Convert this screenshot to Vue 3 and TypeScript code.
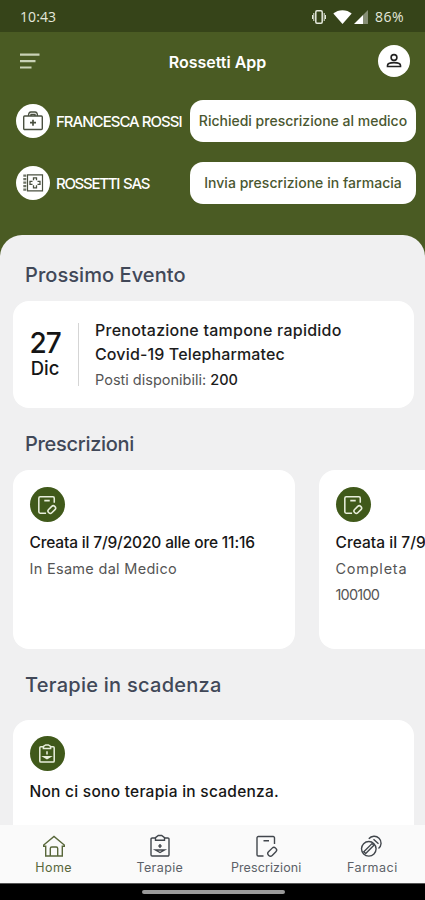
<script setup lang="ts">
interface Contact {
  name: string
  icon: 'bag' | 'safe'
  action: string
  cls: string
}
interface Prescription {
  title: string
  status: string
  code?: string
}
interface Tab {
  label: string
  icon: 'home' | 'clipboard' | 'note' | 'pills'
}

const contacts: Contact[] = [
  { name: 'FRANCESCA ROSSI', icon: 'bag', action: 'Richiedi prescrizione al medico', cls: 'doctor' },
  { name: 'ROSSETTI SAS', icon: 'safe', action: 'Invia prescrizione in farmacia', cls: 'pharmacy' },
]
const prescriptions: Prescription[] = [
  { title: 'Creata il 7/9/2020 alle ore 11:16', status: 'In Esame dal Medico' },
  { title: 'Creata il 7/9', status: 'Completa', code: '100100' },
]
const tabs: Tab[] = [
  { label: 'Home', icon: 'home' },
  { label: 'Terapie', icon: 'clipboard' },
  { label: 'Prescrizioni', icon: 'note' },
  { label: 'Farmaci', icon: 'pills' },
]
</script>

<template>
  <div class="phone">
    <div class="status">
      <span class="clock">10:43</span>
      <div class="indicators">
        <svg class="vibrate" width="14" height="16" viewBox="0 0 14 16" fill="none" stroke="currentColor">
          <rect x="3.8" y="1.8" width="6.4" height="12.4" rx="1.2" stroke-width="1.5" />
          <path d="M1.8 4v8M.5 6v4M12.2 4v8M13.5 6v4" />
        </svg>
        <svg class="wifi" width="19" height="14" viewBox="0 0 19 14">
          <path d="M.3 3.600C5.300-.9 13.700-.9 18.700 3.600L9.500 14Z" fill="currentColor" />
        </svg>
        <svg class="signal" width="14" height="14" viewBox="0 0 14 14" fill="currentColor">
          <path d="M0 14 9 5v9Z" />
          <path d="M9 5 14 0v14H9Z" opacity=".4" />
        </svg>
        <span class="battery">86%</span>
      </div>
    </div>

    <header class="header">
      <div class="appbar">
        <svg class="menu" width="20" height="18" viewBox="0 0 20 18" fill="none" stroke="currentColor" stroke-width="2.2">
          <path d="M0 1.700h19.500M0 8.200h15.500M0 14.500h11.500" />
        </svg>
        <h1>Rossetti App</h1>
        <div class="avatar">
          <svg width="16" height="16" viewBox="0 0 16 16" fill="none" stroke="currentColor" stroke-width="1.6">
            <circle cx="8" cy="4.500" r="2.900" />
            <path d="M1.500 13.500v-1C1.500 10.400 4 9.600 8 9.600s6.500.8 6.500 2.900v1Z" />
          </svg>
        </div>
      </div>
      <div v-for="c in contacts" :key="c.name" class="contact" :class="c.cls">
        <div class="badge">
          <svg v-if="c.icon === 'bag'" width="22" height="22" viewBox="0 0 22 22" fill="none" stroke="currentColor" stroke-width="1.400">
            <rect x="1.700" y="6" width="18.600" height="13.500" rx="1" />
            <path d="M6.500 6c0-2.200 1-4 2.500-4h4c1.500 0 2.500 1.800 2.500 4M9 6V4.500h4V6" />
            <path d="M11 9.700v6M8 12.700h6" stroke-width="1.700" />
          </svg>
          <svg v-else width="22" height="22" viewBox="0 0 22 22" fill="none" stroke="currentColor" stroke-width="1.200">
            <path d="M5.500 2.800h15v16h-15Z" />
            <path d="M2.800 2.500v17" stroke-width="3" stroke-dasharray="2.200 1.300" opacity=".8" />
            <path d="M11.500 8.300V5.800h3v2.500M15.500 9.300H18v3h-2.500M14.500 13.300v2.500h-3v-2.500M10.500 12.300H8v-3h2.500" stroke-width="1.300" />
          </svg>
        </div>
        <span class="name">{{ c.name }}</span>
        <button class="action" type="button">{{ c.action }}</button>
      </div>
    </header>

    <main class="panel">
      <h2 class="h-event">Prossimo Evento</h2>
      <section class="card event">
        <div class="date">
          <span class="day">27</span>
          <span class="month">Dic</span>
        </div>
        <div class="details">
          <p class="title l1">Prenotazione tampone rapidido</p>
          <p class="title l2">Covid-19 Telepharmatec</p>
          <p class="seats">Posti disponibili: <b>200</b></p>
        </div>
      </section>

      <h2 class="h-presc">Prescrizioni</h2>
      <div class="carousel">
        <section v-for="p in prescriptions" :key="p.title" class="card prescription">
          <div class="disc">
            <svg width="20" height="20" viewBox="0 0 22 22" fill="none" stroke="currentColor" stroke-width="1.700">
              <path d="M19 8.500V3.500A1.500 1.500 0 0 0 17.500 2h-14A1.500 1.500 0 0 0 2 3.500v15A1.500 1.500 0 0 0 3.500 20H10M8 6.200h6" />
              <rect x="11.500" y="13.500" width="9.500" height="5" rx="2.300" transform="rotate(-45 16.300 16)" />
            </svg>
          </div>
          <p class="created">{{ p.title }}</p>
          <p class="info">{{ p.status }}</p>
          <p v-if="p.code" class="info code">{{ p.code }}</p>
        </section>
      </div>

      <h2 class="h-therapy">Terapie in scadenza</h2>
      <section class="card therapy">
        <div class="disc">
          <svg width="18" height="21" viewBox="0 0 20 22" fill="none" stroke="currentColor" stroke-width="1.700">
            <path d="M6 3.500H3.200A1.200 1.200 0 0 0 2 4.700v14.600a1.200 1.200 0 0 0 1.200 1.200h13.600a1.200 1.200 0 0 0 1.200-1.200V4.700a1.200 1.200 0 0 0-1.200-1.200H14" />
            <path d="M6 5.500V3.200L8.500 1.500h3L14 3.200v2.300ZM10 8.500v3.500M6.500 14.500h7L10 16.700Z" />
          </svg>
        </div>
        <p class="empty">Non ci sono terapia in scadenza.</p>
      </section>
    </main>

    <nav class="tabs">
      <a v-for="(t, i) in tabs" :key="t.label" class="tab" :class="[t.icon, { active: i === 0 }]">
        <svg width="24" height="24" viewBox="0 0 24 24" fill="none" stroke="currentColor" stroke-width="1.400">
          <template v-if="t.icon === 'home'">
            <path d="M1.700 11 12 2.500 22.300 11v1.300h-2V22H3.700v-9.700h-2Z" />
            <path d="M8.300 22v-7.500a1.500 1.500 0 0 1 1.500-1.500h4.400a1.500 1.500 0 0 1 1.500 1.500V22" />
          </template>
          <template v-else-if="t.icon === 'clipboard'">
            <path d="M8 4H4.200A1.200 1.200 0 0 0 3 5.200v15.600A1.200 1.200 0 0 0 4.200 22h15.600a1.200 1.200 0 0 0 1.200-1.200V5.200A1.200 1.200 0 0 0 19.800 4H16" />
            <path d="M7.500 6.200V3.700L10.300 1.500h3.400l2.800 2.200v2.500Z" />
            <path d="M12 10v4M10.300 12h3.400M7.500 16h9L12 18.500Z" />
          </template>
          <template v-else-if="t.icon === 'note'">
            <path d="M20.500 10V3.800A1.300 1.300 0 0 0 19.200 2.500H4.300A1.300 1.300 0 0 0 3 3.800v16.900A1.300 1.300 0 0 0 4.300 22H9.500M9.500 6.800h5.500" />
            <rect x="13.200" y="15.200" width="10" height="5.200" rx="2.400" transform="rotate(-45 18.200 17.800)" />
          </template>
          <template v-else>
            <circle cx="8.800" cy="14.800" r="7.300" />
            <path d="m3.800 17.800 8.200-8.200 1.900 1.700-8.200 8.200Z" />
            <path d="M8.800 4.800a6.900 6.900 0 1 1 9.700 9.700M13.500 5.300l5 4.500" />
          </template>
        </svg>
        <span>{{ t.label }}</span>
      </a>
    </nav>
    <div class="gesture"><i></i></div>
  </div>
</template>

<style>
body {
  margin: 0;
  background: #4a5b23;
}
</style>

<style scoped>
* {
  box-sizing: border-box;
}
p, h1, h2 {
  margin: 0;
  white-space: nowrap;
}
.phone {
  width: 425px;
  height: 900px;
  display: flex;
  flex-direction: column;
  overflow: hidden;
  background: #4a5b23;
  font-family: Inter, sans-serif;
}
.status {
  flex: none;
  height: 32px;
  padding: 1px 21px 0 20px;
  display: flex;
  align-items: center;
  justify-content: space-between;
  background: #364419;
  color: #e4e8dc;
  font: 500 14px/32px "Open Sans", sans-serif;
}
.clock {
  letter-spacing: 0.1px;
}
.battery {
  letter-spacing: 0.5px;
}
.indicators {
  display: flex;
  align-items: center;
}
.vibrate { margin-right: 7px; }
.wifi { margin-right: 2px; color: #fff; }
.signal { margin-right: 7px; color: #fff; }
.header {
  flex: none;
  height: 203px;
  padding: 0 9px 0 16px;
}
.appbar {
  height: 59px;
  padding: 0 6px 0 4px;
  display: flex;
  align-items: center;
  justify-content: space-between;
}
.menu { color: #c9d2b6; }
h1 {
  color: #fff;
  font-size: 16px;
  font-weight: 600;
  line-height: 24px;
  margin-left: 17px;
}
.avatar {
  width: 32px;
  height: 32px;
  margin-top: -1px;
  border-radius: 50%;
  display: grid;
  place-items: center;
  background: #fff;
  color: #222;
}
.contact {
  height: 42px;
  margin: 9px 0 20px;
  display: flex;
  align-items: center;
}
.contact + .contact { margin-top: 0; }
.badge {
  flex: none;
  width: 34px;
  height: 34px;
  border-radius: 50%;
  display: grid;
  place-items: center;
  background: #fff;
  color: #4a5040;
}
.name {
  width: 134px;
  margin-left: 6px;
  color: #fff;
  font-size: 15px;
  font-weight: 500;
  letter-spacing: -0.98px;
  white-space: nowrap;
}
.pharmacy .name { letter-spacing: -1.3px; word-spacing: 1.5px; }
.action {
  width: 226px;
  height: 42px;
  padding: 0;
  border: 0;
  border-radius: 13px;
  background: #fff;
  color: #4a5730;
  font: 500 14px/20px Inter, sans-serif;
  white-space: nowrap;
}
.pharmacy .action { letter-spacing: 0.04px; }
.panel {
  flex: none;
  height: 590px;
  padding: 25px 0 0 13px;
  border-radius: 22px 22px 0 0;
  background: #f0f0f1;
  overflow: hidden;
}
h2 {
  padding-left: 12px;
  color: #414858;
  font-size: 20px;
  font-weight: 500;
  line-height: 30px;
}
.h-event { letter-spacing: 0.06px; }
.h-presc { letter-spacing: -0.3px; padding-top: 2px; line-height: 28px; }
.h-therapy { letter-spacing: 0.26px; padding-top: 2px; line-height: 28px; }
.card {
  background: #fff;
  border-radius: 16px;
}
.event {
  width: 401px;
  height: 107px;
  margin: 11px 0 20px;
  padding: 2px 17px 0;
  display: flex;
  align-items: center;
}
.date {
  box-sizing: content-box;
  width: 30px;
  height: 63px;
  padding-right: 18px;
  margin: -2px 16px 0 0;
  border-right: 1px solid #d5d5d5;
  display: flex;
  flex-direction: column;
  align-items: center;
  justify-content: center;
  color: #151515;
}
.day {
  font-size: 28px;
  line-height: 28px;
  font-weight: 500;
  letter-spacing: -1.2px;
}
.month {
  font-size: 18.5px;
  line-height: 23px;
  font-weight: 500;
}
.title {
  color: #1c1c1c;
  font-size: 16px;
  line-height: 24px;
  font-weight: 500;
}
.l1 { letter-spacing: 0.24px; }
.l2 { letter-spacing: 0.14px; }
.seats {
  color: #555;
  font-size: 14.5px;
  line-height: 28px;
}
.seats b {
  color: #1c1c1c;
  font-weight: 500;
}
.carousel {
  display: flex;
  gap: 24px;
  margin: 12px 0 20px;
  overflow: hidden;
}
.prescription {
  flex: none;
  width: 282px;
  height: 179px;
  padding: 17px 17px 17px 16.5px;
}
.disc {
  width: 35px;
  height: 35px;
  border-radius: 50%;
  display: grid;
  place-items: center;
  background: #40591a;
  color: #e8eedb;
}
.created, .empty {
  margin-top: 8px;
  color: #161616;
  font-size: 15.500px;
  line-height: 26px;
  font-weight: 500;
}
.created { letter-spacing: -0.16px; }
.prescription + .prescription .created { letter-spacing: 0.05px; }
.empty { letter-spacing: 0.26px; }
.info {
  color: #555;
  font-size: 14.500px;
  line-height: 26px;
  letter-spacing: 0.3px;
}
.prescription + .prescription .info { letter-spacing: 0.75px; }
.prescription + .prescription .info.code { letter-spacing: -0.8px; }
.therapy {
  width: 401px;
  height: 130px;
  margin-top: 21px;
  padding: 16px 17px 16px 16.5px;
}
.tabs {
  flex: none;
  height: 58px;
  display: grid;
  grid-template-columns: repeat(4, 1fr);
  background: #fafafa;
}
.tab {
  display: flex;
  flex-direction: column;
  align-items: center;
  padding: 9px 0 0 1px;
  color: #5c6168;
  font-size: 12.500px;
  line-height: 19px;
  letter-spacing: 0.1px;
  white-space: nowrap;
}
.tab.home { letter-spacing: 0.4px; }
.tab.pills { letter-spacing: 0.5px; }
.tab.clipboard { letter-spacing: 0.4px; }
.tab svg { color: #41464c; }
.tab.active, .tab.active svg { color: #58673a; }
.gesture {
  flex: 1;
  display: flex;
  justify-content: center;
  padding: 6px 0 0 2px;
  background: #000;
  border-top: 1px solid #555;
}
.gesture i {
  width: 143px;
  height: 4px;
  border-radius: 2px;
  background: #999;
}
</style>
